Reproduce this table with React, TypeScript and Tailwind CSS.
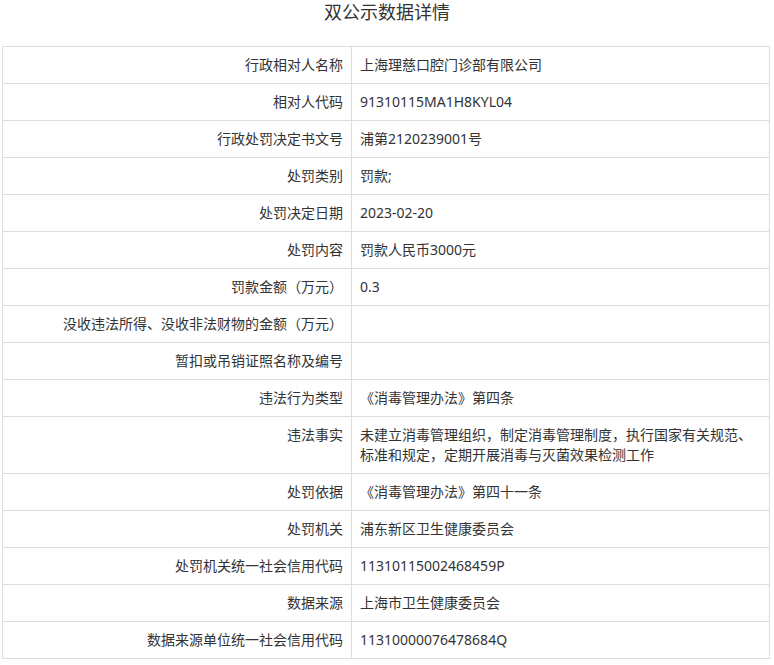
const rows: [string, string][] = [
  ["行政相对人名称", "上海理慈口腔门诊部有限公司"],
  ["相对人代码", "91310115MA1H8KYL04"],
  ["行政处罚决定书文号", "浦第2120239001号"],
  ["处罚类别", "罚款;"],
  ["处罚决定日期", "2023-02-20"],
  ["处罚内容", "罚款人民币3000元"],
  ["罚款金额（万元）", "0.3"],
  ["没收违法所得、没收非法财物的金额（万元）", ""],
  ["暂扣或吊销证照名称及编号", ""],
  ["违法行为类型", "《消毒管理办法》第四条"],
  ["违法事实", "未建立消毒管理组织，制定消毒管理制度，执行国家有关规范、标准和规定，定期开展消毒与灭菌效果检测工作"],
  ["处罚依据", "《消毒管理办法》第四十一条"],
  ["处罚机关", "浦东新区卫生健康委员会"],
  ["处罚机关统一社会信用代码", "11310115002468459P"],
  ["数据来源", "上海市卫生健康委员会"],
  ["数据来源单位统一社会信用代码", "11310000076478684Q"],
];

export default function App() {
  return (
    <div className="w-[774px] h-[665px] bg-white text-[#333] font-['Noto_Sans','Noto_Sans_CJK_SC',sans-serif]">
      <h1 className="h-[46px] text-center text-[18px] leading-[24px] font-normal">双公示数据详情</h1>
      <div className="px-[2px]">
        <table className="w-[768px] border-collapse table-fixed text-[14px] leading-[20px]">
          <colgroup>
            <col className="w-[349px]" />
            <col />
          </colgroup>
          <tbody>
            {rows.map(([k, v]) => (
              <tr key={k}>
                <td className="border border-[#ddd] px-[8px] py-[8px] text-right align-top">{k}</td>
                <td className="border border-[#ddd] px-[8px] py-[8px] align-top">{v}</td>
              </tr>
            ))}
          </tbody>
        </table>
      </div>
    </div>
  );
}
